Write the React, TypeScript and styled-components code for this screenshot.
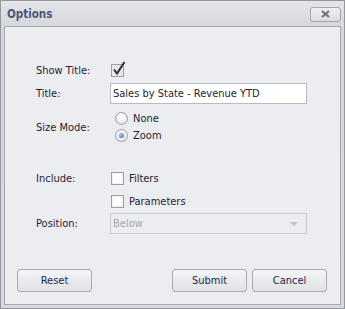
import styled, { createGlobalStyle } from 'styled-components'

const Global = createGlobalStyle`
    html, body {
        margin: 0;
        padding: 0;
        background: #ffffff;
    }
    * { box-sizing: border-box; }
`

const Window = styled.div`
    width: 345px;
    height: 309px;
    display: flex;
    flex-direction: column;
    background: linear-gradient(180deg, #e3e4e8 0%, #d6d7db 26px, #d8d9dd 100%);
    border: 1px solid #9496a0;
    padding: 0 3px 3px 3px;
    font-family: "DejaVu Sans Condensed", "Liberation Sans", Arial, sans-serif;
    font-size: 11px;
    color: #1f2330;
`

const TitleBar = styled.div`
    height: 25px;
    display: flex;
    align-items: center;
    justify-content: space-between;
    padding: 0 0 0 3px;
`

const Caption = styled.span`
    font-weight: bold;
    font-size: 11.5px;
    color: #4a5677;
`

const CloseButton = styled.div`
    width: 31px;
    height: 15px;
    margin-top: 1px;
    border: 1px solid #a3a5ad;
    border-radius: 3px;
    background: linear-gradient(180deg, #eeeff2, #dcdde1);
    display: flex;
    align-items: center;
    justify-content: center;
`

const Body = styled.div`
    flex: 1;
    display: flex;
    flex-direction: column;
    background: #ecedf1;
    border: 1px solid #a6a8b0;
    padding: 35px 13px 12px 12px;
`

const Form = styled.div`
    display: grid;
    grid-template-columns: 74px 197px;
    padding-left: 19px;
    align-items: center;
`

const Label = styled.div<{ $top: number }>`
    margin-top: ${p => p.$top}px;
    height: 100%;
    display: flex;
    align-items: center;
`

const Cell = styled.div<{ $top: number; $h: number }>`
    margin-top: ${p => p.$top}px;
    height: ${p => p.$h}px;
    display: flex;
    flex-direction: column;
    justify-content: center;
`

const Option = styled.label`
    display: flex;
    align-items: center;
    gap: 5px;
    height: 17px;
`

const Box = styled.span<{ $checked?: boolean }>`
    position: relative;
    width: 13px;
    height: 13px;
    margin-left: 1px;
    border: 1px solid #9d9fa6;
    background: ${p => (p.$checked ? '#e3e4e8' : '#ffffff')};
    box-shadow: inset 0 0 0 1px ${p => (p.$checked ? '#e8e9ec' : '#f0f0f2')};
`

const Check = styled.svg`
    position: absolute;
    left: 0px;
    top: -4px;
`

const Radio = styled.span<{ $on?: boolean }>`
    width: 13px;
    height: 13px;
    margin-left: 5px;
    border-radius: 50%;
    border: 1px solid #9c9ea6;
    background: radial-gradient(circle at 50% 40%, #ffffff 0%, #f2f3f5 45%, #d4d6dc 100%);
    display: flex;
    align-items: center;
    justify-content: center;
    &::after {
        content: "";
        display: ${p => (p.$on ? 'block' : 'none')};
        width: 5px;
        height: 5px;
        border-radius: 50%;
        background: radial-gradient(circle at 40% 35%, #a8c4f0, #3a63b8);
    }
`

const TextBox = styled.div`
    height: 21px;
    border: 1px solid #b9bbc2;
    background: #ffffff;
    display: flex;
    align-items: center;
    padding-left: 2px;
`

const Combo = styled.div`
    height: 21px;
    border: 1px solid #c9cace;
    background: #ecedf1;
    display: flex;
    align-items: center;
    justify-content: space-between;
    padding: 0 8px 0 2px;
    color: #a4a6ab;
`

const Arrow = styled.span`
    width: 0;
    height: 0;
    border-left: 4px solid transparent;
    border-right: 4px solid transparent;
    border-top: 4px solid #c3c4c8;
    margin-top: 1px;
`

const Footer = styled.div`
    margin-top: auto;
    display: flex;
    gap: 5px;
`

const Button = styled.div`
    width: 75px;
    height: 23px;
    border: 1px solid #a9abb2;
    border-radius: 3px;
    background: linear-gradient(180deg, #f6f6f8 0%, #e9eaed 50%, #e1e2e6 100%);
    display: flex;
    align-items: center;
    justify-content: center;
    color: #1e2550;
`

const Spacer = styled.div`
    flex: 1;
`

export default function App() {
    return (
        <>
            <Global />
            <Window>
                <TitleBar>
                    <Caption>Options</Caption>
                    <CloseButton>
                        <svg width="11" height="8" viewBox="0 0 11 8">
                            <path d="M2 1 L9 7 M9 1 L2 7" stroke="#6f7382" strokeWidth="2.2" />
                        </svg>
                    </CloseButton>
                </TitleBar>
                <Body>
                    <Form>
                        <Label $top={0}>Show Title:</Label>
                        <Cell $top={0} $h={16}>
                            <Option>
                                <Box $checked>
                                    <Check width="14" height="15" viewBox="0 0 14 15">
                                        <path d="M2 8.5 L5 12.5 L12.5 1" fill="none" stroke="#2b2e36" strokeWidth="2" />
                                    </Check>
                                </Box>
                            </Option>
                        </Cell>

                        <Label $top={5}>Title:</Label>
                        <Cell $top={5} $h={21}>
                            <TextBox>Sales by State - Revenue YTD</TextBox>
                        </Cell>

                        <Label $top={6}>Size Mode:</Label>
                        <Cell $top={6} $h={34}>
                            <Option><Radio />None</Option>
                            <Option><Radio $on />Zoom</Option>
                        </Cell>

                        <Label $top={26}>Include:</Label>
                        <Cell $top={26} $h={17}>
                            <Option><Box />Filters</Option>
                        </Cell>

                        <div />
                        <Cell $top={6} $h={17}>
                            <Option><Box />Parameters</Option>
                        </Cell>

                        <Label $top={3}>Position:</Label>
                        <Cell $top={3} $h={21}>
                            <Combo>Below<Arrow /></Combo>
                        </Cell>
                    </Form>
                    <Footer>
                        <Button>Reset</Button>
                        <Spacer />
                        <Button>Submit</Button>
                        <Button>Cancel</Button>
                    </Footer>
                </Body>
            </Window>
        </>
    )
}
